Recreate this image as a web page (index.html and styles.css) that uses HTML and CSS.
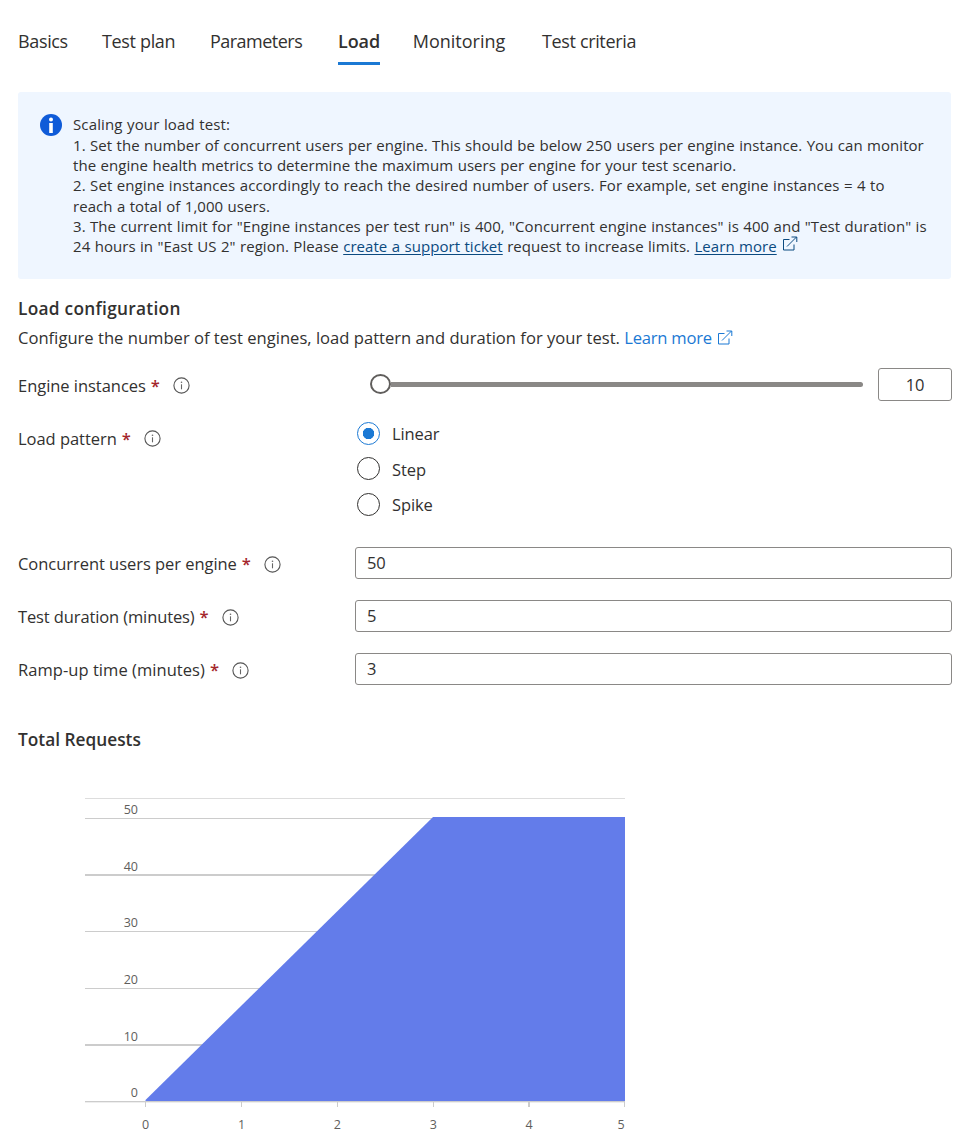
FILE: index.html
```html
<!DOCTYPE html>
<html lang="en">
<head>
<meta charset="utf-8">
<title>Load test</title>
<link rel="stylesheet" href="styles.css">
</head>
<body>
<svg class="defs" width="0" height="0">
  <symbol id="info" viewBox="0 0 17 17"><circle cx="8.5" cy="8.5" r="7.6" fill="none" stroke="#555" stroke-width="1.1"/><path d="M8.5 7.3V12.3" stroke="#666" stroke-width="1.1"/><circle cx="8.5" cy="5.2" r=".8" fill="#666"/></symbol>
  <symbol id="external" viewBox="0 0 16 16"><path d="M7.5 3.5H1.5V14H12V8.500M5 10.500L14.500 1M9.500 1H14.800V6" fill="none" stroke="currentColor" stroke-width="1"/></symbol>
</svg>
<nav class="tabs">
  <a class="tab">Basics</a><a class="tab">Test plan</a><a class="tab t-params">Parameters</a><a class="tab t-load active">Load</a><a class="tab t-mon">Monitoring</a><a class="tab t-crit">Test criteria</a>
</nav>
<section class="notice">
  <svg class="notice-icon" viewBox="0 0 22 22"><circle cx="11" cy="11" r="11" fill="#0f5bd8"/><circle cx="11" cy="5.600" r="2" fill="#fff"/><path d="M9.200 9H12.800V19H9.200Z" fill="#fff"/></svg>
  <div class="notice-text">
    <div class="l1">Scaling your load test:</div>
    <div>1. Set the number of concurrent users per engine. This should be below 250 users per engine instance. You can monitor</div>
    <div>the engine health metrics to determine the maximum users per engine for your test scenario.</div>
    <div class="l4">2. Set engine instances accordingly to reach the desired number of users. For example, set engine instances = 4 to</div>
    <div>reach a total of 1,000 users.</div>
    <div>3. The current limit for "Engine instances per test run" is 400, "Concurrent engine instances" is 400 and "Test duration" is</div>
    <div class="l7">24 hours in "East US 2" region. Please <a>create a support ticket</a> request to increase limits. <a>Learn more</a><svg class="ext"><use href="#external"/></svg></div>
  </div>
</section>
<h2 class="h-config">Load configuration</h2>
<p class="desc">Configure the number of test engines, load pattern and duration for your test. <a>Learn more<svg class="ext"><use href="#external"/></svg></a></p>
<form class="form">
  <div class="row r-engine"><label><span>Engine instances</span><b>*</b><svg class="info"><use href="#info"/></svg></label>
    <div class="slider"><i class="thumb"></i><i class="track"></i></div><div class="box num">10</div></div>
  <div class="row r-pattern"><label><span>Load pattern</span><b>*</b><svg class="info"><use href="#info"/></svg></label>
    <div class="radios">
      <div class="radio on"><i></i><span>Linear</span></div>
      <div class="radio"><i></i><span>Step</span></div>
      <div class="radio"><i></i><span>Spike</span></div>
    </div></div>
  <div class="row field"><label><span>Concurrent users per engine</span><b>*</b><svg class="info"><use href="#info"/></svg></label><div class="box">50</div></div>
  <div class="row field"><label><span class="duration">Test duration (minutes)</span><b>*</b><svg class="info"><use href="#info"/></svg></label><div class="box">5</div></div>
  <div class="row field"><label><span class="ramp">Ramp-up time (minutes)</span><b>*</b><svg class="info"><use href="#info"/></svg></label><div class="box">3</div></div>
</form>
<h2 class="h-total">Total Requests</h2>
<svg class="chart" width="560" height="355" viewBox="80 780 560 355">
  <g fill="#ccc" shape-rendering="crispEdges">
    <rect x="85" y="798" width="540" height="1" fill="#ddd"/>
    <rect x="85" y="818" width="540" height="1"/>
    <rect x="85" y="874" width="540" height="2"/>
    <rect x="85" y="931" width="540" height="1"/>
    <rect x="85" y="988" width="540" height="1"/>
    <rect x="85" y="1044" width="540" height="2"/>
  </g>
  <path d="M145.500 1101V1100L433 817H625V1101Z" fill="#637cea"/>
  <g fill="#ccc" shape-rendering="crispEdges">
    <rect x="85" y="1101" width="540" height="1"/>
    <rect x="85" y="1102" width="540" height="1" fill="#eee"/>
    <rect x="145" y="1102" width="1" height="5"/><rect x="241" y="1102" width="1" height="5"/><rect x="337" y="1102" width="1" height="5"/><rect x="433" y="1102" width="1" height="5"/><rect x="528" y="1102" width="2" height="5"/><rect x="624" y="1102" width="1" height="5"/>
  </g>
  <g class="axis" text-anchor="end">
    <text x="138" y="814">50</text><text x="138" y="871">40</text><text x="138" y="927">30</text><text x="138" y="984">20</text><text x="138" y="1041">10</text><text x="138" y="1097">0</text>
  </g>
  <g class="axis" text-anchor="middle">
    <text x="145.500" y="1129">0</text><text x="241.500" y="1129">1</text><text x="337.300" y="1129">2</text><text x="433.300" y="1129">3</text><text x="529" y="1129">4</text><text x="621" y="1129">5</text>
  </g>
</svg>
</body>
</html>
```
FILE: styles.css
```css
* { box-sizing: border-box; }
body { margin: 0; padding: 0 27px 0 18px; height: 1135px; overflow: hidden; background: #fff; color: #323130; font-family: "Open Sans", "Noto Sans", sans-serif; font-size: 16.5px; white-space: nowrap; }
svg { display: block; flex: none; }
.defs { position: absolute; }
.tabs { display: flex; gap: 34.200px; height: 92px; padding-top: 27px; font-size: 18px; line-height: 28px; }
.tab { height: 38px; letter-spacing: -0.35px; }
.t-params { letter-spacing: -0.5px; margin-left: 0.5px; }
.t-load { letter-spacing: -0.1px; margin-left: 1.5px; }
.t-mon { letter-spacing: 0; margin-left: -1.5px; }
.t-crit { margin-left: 2.500px; }
.active { font-weight: 600; border-bottom: 3px solid #1b79d4; }
.notice { display: flex; gap: 11px; width: 933px; height: 187px; padding: 22px 0 0 22px; background: #eff6ff; border-radius: 3px; }
.notice-icon { width: 22px; height: 22px; }
.notice-text { padding-top: 0.4px; font-size: 15px; line-height: 20.300px; letter-spacing: 0.05px; word-spacing: 0.45px; }
.notice-text div { height: 20.300px; }
.notice-text .l1 { letter-spacing: 0.130px; }
.notice-text .l4 { letter-spacing: 0.080px; }
.notice-text a { color: #0b4a80; text-decoration: underline; text-underline-offset: 2px; text-decoration-thickness: 1px; }
.ext { display: inline-block; width: 16px; height: 16px; margin: -4px 0 -4px 5px; vertical-align: 2px; }
.notice .ext { color: #0b4a80; margin: -8px 0 -4px 5px; vertical-align: 4px; }
h2 { margin: 0; font-size: 17.300px; font-weight: 600; line-height: 24px; }
.h-config { margin-top: 18px; letter-spacing: 0.280px; }
.desc { margin: 5px 0 0; font-size: 16.600px; line-height: 24px; letter-spacing: 0; }
.desc a { color: #1b79d4; letter-spacing: -0.230px; }
.form { display: block; width: 934px; margin-top: 18px; }
.row { display: grid; grid-template-columns: 337px 1fr; }
label { display: flex; height: 33px; align-items: center; padding-top: 2px; letter-spacing: -0.040px; }
label b { color: #a4262c; font-weight: 600; margin-left: 5px; line-height: 20px; }
.field label span, .field label b { margin-top: -2px; }
.duration { letter-spacing: -0.120px; }
.ramp { letter-spacing: 0.050px; }
.info { width: 17px; height: 17px; margin-left: 13px; }
.box { height: 32px; border: 1px solid #8a8886; border-radius: 3px; padding-left: 11px; line-height: 30px; letter-spacing: -0.3px; }
.r-engine { grid-template-columns: 352px 493px 74px; column-gap: 0; justify-content: start; height: 53px; }
.slider { display: flex; align-items: center; height: 32px; }
.thumb { flex: none; width: 21px; height: 20px; border: 2px solid #605e5c; border-radius: 50%; }
.track { flex: 1; height: 5px; margin-top: 1px; background: #8a8886; border-radius: 0 3px 3px 0; }
.num { height: 33px; padding: 1px 0 0; text-align: center; width: 74px; margin-left: 15px; }
.r-pattern { height: 126px; }
.radios { display: flex; flex-direction: column; gap: 11.500px; padding: 0 0 0 2px; }
.radio { display: flex; align-items: center; gap: 12px; height: 24px; letter-spacing: -0.1px; }
.radio i { width: 23px; height: 23px; border: 1px solid #323130; border-radius: 50%; }
.radio span { padding-top: 1px; }
.radio.on i { border-color: #1b79d4; background: radial-gradient(circle, #1b79d4 5.400px, transparent 6px); }
.field { height: 53px; }
.h-total { margin-top: 22px; }
.chart { margin: 28px 0 0 62px; }
.axis { fill: #605e5c; font-size: 12.500px; }
```
